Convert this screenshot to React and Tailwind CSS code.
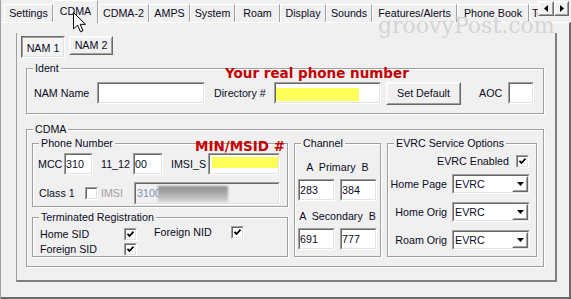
import React from "react";

const tabs = [
  ["Settings", "w-[49px]"],
  ["CDMA", "w-[45px]"],
  ["CDMA-2", "w-[51px]"],
  ["AMPS", "w-[41px]"],
  ["System", "w-[45px]"],
  ["Roam", "w-[45px]"],
  ["Display", "w-[46px]"],
  ["Sounds", "w-[46px]"],
  ["Features/Alerts", "w-[85px]"],
  ["Phone Book", "w-[72px]"],
];

// sunken 3d edit box
const Field = ({ className = "", inner = "bg-white", children }) => (
  <div
    className={`border border-t-[#a0a0a0] border-l-[#a0a0a0] border-r-white border-b-white ${className}`}
  >
    <div
      className={`h-full border border-t-[#696969] border-l-[#696969] border-r-[#e3e3e3] border-b-[#e3e3e3] ${inner}`}
    >
      {children}
    </div>
  </div>
);

const Raised = ({ className = "", children }) => (
  <div
    className={`border border-t-white border-l-white border-r-[#696969] border-b-[#696969] ${className}`}
  >
    <div className="h-full flex items-center justify-center border border-t-[#f8f8f8] border-l-[#f8f8f8] border-r-[#a0a0a0] border-b-[#a0a0a0]">
      {children}
    </div>
  </div>
);

const Check = ({ checked, className = "" }) => (
  <div
    className={`w-[13px] h-[13px] shrink-0 border border-t-[#a0a0a0] border-l-[#a0a0a0] border-r-white border-b-white ${className}`}
  >
    <div className="h-full border border-t-[#696969] border-l-[#696969] border-r-[#e3e3e3] border-b-[#e3e3e3] bg-white">
      {checked && (
        <svg width="9" height="9" viewBox="0 0 9 9" className="block">
          <path d="M1.5 3.8l2 2.2 4-4.3" stroke="#000" strokeWidth="1.8" fill="none" />
        </svg>
      )}
    </div>
  </div>
);

const Group = ({ label, className = "", children }) => (
  <div
    className={`relative border border-[#a0a0a0] shadow-[inset_1px_1px_0_#fff,1px_1px_0_#fff] ${className}`}
  >
    <span className="absolute left-[6px] top-[-7px] bg-[#f0f0f0] px-[2px] leading-[13px] whitespace-nowrap">
      {label}
    </span>
    {children}
  </div>
);

const Combo = () => (
  <Field className="w-[78px] h-[20px]">
    <div className="flex h-full items-center">
      <span className="flex-1 pl-[1px]">EVRC</span>
      <Raised className="w-[16px] h-full">
        <svg width="7" height="4" viewBox="0 0 7 4">
          <path d="M0 0h7L3.5 4z" fill="#000" />
        </svg>
      </Raised>
    </div>
  </Field>
);

const Label = ({ className = "", children }) => (
  <div className={`h-[22px] flex items-center whitespace-nowrap ${className}`}>
    {children}
  </div>
);

const App = () => {
  return (
    <div className="relative w-[571px] h-[299px] overflow-hidden bg-[#f0f0f0] border-l border-l-[#a0a0a0] text-[10.7px] leading-[13px] text-[#0a0a1e] font-['Liberation_Sans',Arial,sans-serif]">
      {/* tab strip */}
      <div className="relative z-10 flex h-[22px] items-start pl-[3px]">
        {tabs.map(([name, w]) =>
          name === "CDMA" ? (
            <div
              key={name}
              className={`${w} h-[23px] border-t border-l border-r border-t-white border-l-white border-r-[#a0a0a0] bg-[#f0f0f0] pt-[4px] text-center`}
            >
              {name}
            </div>
          ) : (
            <div
              key={name}
              className={`${w} mt-[4px] h-[18px] border-t border-l border-r border-t-white border-l-white border-r-[#a0a0a0] flex items-center justify-center whitespace-nowrap`}
            >
              {name}
            </div>
          )
        )}
        <div className="w-[9px] mt-[4px] h-[18px] border-t border-l border-t-white border-l-white overflow-hidden whitespace-nowrap pl-[2px] pt-[2px]">
          Test
        </div>
      </div>

      {/* page */}
      <div className="h-[277px] border-t border-r-2 border-b-2 border-t-white border-r-[#696969] border-b-[#696969] pl-[15px] pt-[10px]">
        <div className="w-[541px] h-[249px] border-l border-r-2 border-b-2 border-l-[#a0a0a0] border-r-[#808080] border-b-[#808080] pl-[4px] pt-[3px]">
          {/* NAM buttons */}
          <div className="flex items-start gap-[4px]">
            <div className="w-[44px] h-[22px] border border-t-[#696969] border-l-[#696969] border-r-white border-b-white">
              <div className="h-full border border-t-[#a0a0a0] border-l-[#a0a0a0] border-r-[#e3e3e3] border-b-[#e3e3e3] bg-[#f4f4f4] flex items-center justify-center pt-[2px]">
                NAM 1
              </div>
            </div>
            <Raised className="w-[44px] h-[19px]">NAM 2</Raised>
          </div>

          {/* Ident */}
          <Group label="Ident" className="ml-[5px] mt-[10px] w-[518px] h-[46px]">
            <div className="flex items-start pt-[13px]">
              <Label className="ml-[7px] w-[63px]">NAM Name</Label>
              <Field className="w-[108px] h-[22px]" />
              <Label className="ml-[9px] w-[60px]">Directory #</Label>
              <Field className="w-[107px] h-[22px]">
                <div className="mt-[4px] w-[83px] h-[13px] bg-[#ffff5a]" />
              </Field>
              <Raised className="ml-[5px] w-[75px] h-[23px]">Set Default</Raised>
              <Label className="ml-[18px] w-[29px]">AOC</Label>
              <Field className="w-[26px] h-[22px]" />
            </div>
          </Group>

          {/* CDMA */}
          <Group label="CDMA" className="ml-[5px] mt-[15px] w-[518px] h-[138px]">
            <div className="flex items-start gap-[6px] pl-[5px] pt-[13px]">
              <div className="flex flex-col gap-[10px]">
                <Group label="Phone Number" className="w-[256px] h-[64px]">
                  <div className="flex items-start pt-[9px]">
                    <Label className="ml-[5px] w-[26px]">MCC</Label>
                    <Field className="w-[29px] h-[22px]">
                      <div className="h-full flex items-center">310</div>
                    </Field>
                    <Label className="ml-[8px] w-[32px]">11_12</Label>
                    <Field className="w-[30px] h-[22px]">
                      <div className="h-full flex items-center">00</div>
                    </Field>
                    <Label className="ml-[8px] w-[37px]">IMSI_S</Label>
                    <Field className="w-[72px] h-[22px]">
                      <div className="ml-[2px] mt-[2px] w-[66px] h-[11px] bg-[#ffff5a]" />
                    </Field>
                  </div>
                  <div className="flex items-center mt-[7px]">
                    <div className="ml-[6px] w-[46px]">Class 1</div>
                    <Check />
                    <div className="ml-[3px] w-[33px] text-[#a0a0a0]">IMSI</div>
                    <Field className="w-[146px] h-[23px]" inner="bg-[#f0f0f0]">
                      <div className="h-full flex items-center pl-[1px]">
                        <span className="text-[#7d8fb3]">3100</span>
                        <div className="-ml-[3px] w-[70px] h-[16px] bg-linear-to-b from-[#8f8f8f] via-[#adadad] to-[#d6d6d6] blur-[1px]" />
                      </div>
                    </Field>
                  </div>
                </Group>

                <Group label="Terminated Registration" className="w-[256px] h-[40px]">
                  <div className="flex items-start pt-[8px]">
                    <div className="flex items-center ml-[7px] mt-[2px]">
                      <div className="w-[84px]">Home SID</div>
                      <Check checked />
                    </div>
                    <div className="flex items-center ml-[17px]">
                      <div className="w-[77px]">Foreign NID</div>
                      <Check checked />
                    </div>
                  </div>
                  <div className="flex items-center ml-[7px] mt-[2px]">
                    <div className="w-[84px]">Foreign SID</div>
                    <Check checked />
                  </div>
                </Group>
              </div>

              <Group label="Channel" className="w-[87px] h-[114px]">
                <div className="mt-[17px] text-center whitespace-pre">A  Primary  B</div>
                <div className="flex gap-[5px] ml-[3px] mt-[5px]">
                  <Field className="w-[37px] h-[22px]">
                    <div className="h-full flex items-center">283</div>
                  </Field>
                  <Field className="w-[37px] h-[22px]">
                    <div className="h-full flex items-center">384</div>
                  </Field>
                </div>
                <div className="mt-[9px] text-center whitespace-pre">A  Secondary  B</div>
                <div className="flex gap-[5px] ml-[3px] mt-[5px]">
                  <Field className="w-[37px] h-[22px]">
                    <div className="h-full flex items-center">691</div>
                  </Field>
                  <Field className="w-[37px] h-[22px]">
                    <div className="h-full flex items-center">777</div>
                  </Field>
                </div>
              </Group>

              <Group label="EVRC Service Options" className="w-[150px] h-[114px]">
                <div className="flex justify-end items-center pt-[11px] pr-[7px]">
                  <span>EVRC Enabled</span>
                  <Check checked className="ml-[7px]" />
                </div>
                <div className="flex flex-col gap-[8px] mt-[6px]">
                  {["Home Page", "Home Orig", "Roam Orig"].map((l) => (
                    <div key={l} className="flex items-center">
                      <div className="w-[59px] text-right whitespace-nowrap">{l}</div>
                      <div className="ml-[5px]">
                        <Combo />
                      </div>
                    </div>
                  ))}
                </div>
              </Group>
            </div>
          </Group>
        </div>
      </div>

      {/* tab scroll arrows */}
      <div className="absolute left-[537px] top-[1px] z-20 flex">
        <Raised className="w-[16px] h-[15px]">
          <svg width="4" height="7" viewBox="0 0 4 7">
            <path d="M4 0v7L0 3.5z" fill="#000" />
          </svg>
        </Raised>
        <Raised className="w-[15px] h-[15px]">
          <svg width="4" height="7" viewBox="0 0 4 7">
            <path d="M0 0v7l4-3.5z" fill="#000" />
          </svg>
        </Raised>
      </div>

      {/* watermark */}
      <div className="pointer-events-none absolute left-[377px] top-[15px] z-20 text-[22px] leading-[22px] text-[#d4d4d4] font-['DejaVu_Serif',serif]">
        groovyPost.com
      </div>

      {/* annotations */}
      <div className="absolute left-[224px] top-[65px] text-[13.5px] leading-[16px] font-bold text-[#c40000] font-['DejaVu_Sans',sans-serif] whitespace-nowrap">
        Your real phone number
      </div>
      <div className="absolute left-[194px] top-[138px] text-[13.5px] leading-[16px] font-bold text-[#c40000] font-['DejaVu_Sans',sans-serif] whitespace-nowrap">
        MIN/MSID #
      </div>

      {/* mouse pointer */}
      <svg
        className="absolute left-[72px] top-[12px] z-30"
        width="14"
        height="22"
        viewBox="0 0 14 22"
      >
        <path
          d="M0.5 0.5V17L4.5 13L7.5 19.8L10 18.7L7.2 12.3H12.5Z"
          fill="#fff"
          stroke="#000"
          strokeWidth="1"
        />
      </svg>
    </div>
  );
};

export default App;
